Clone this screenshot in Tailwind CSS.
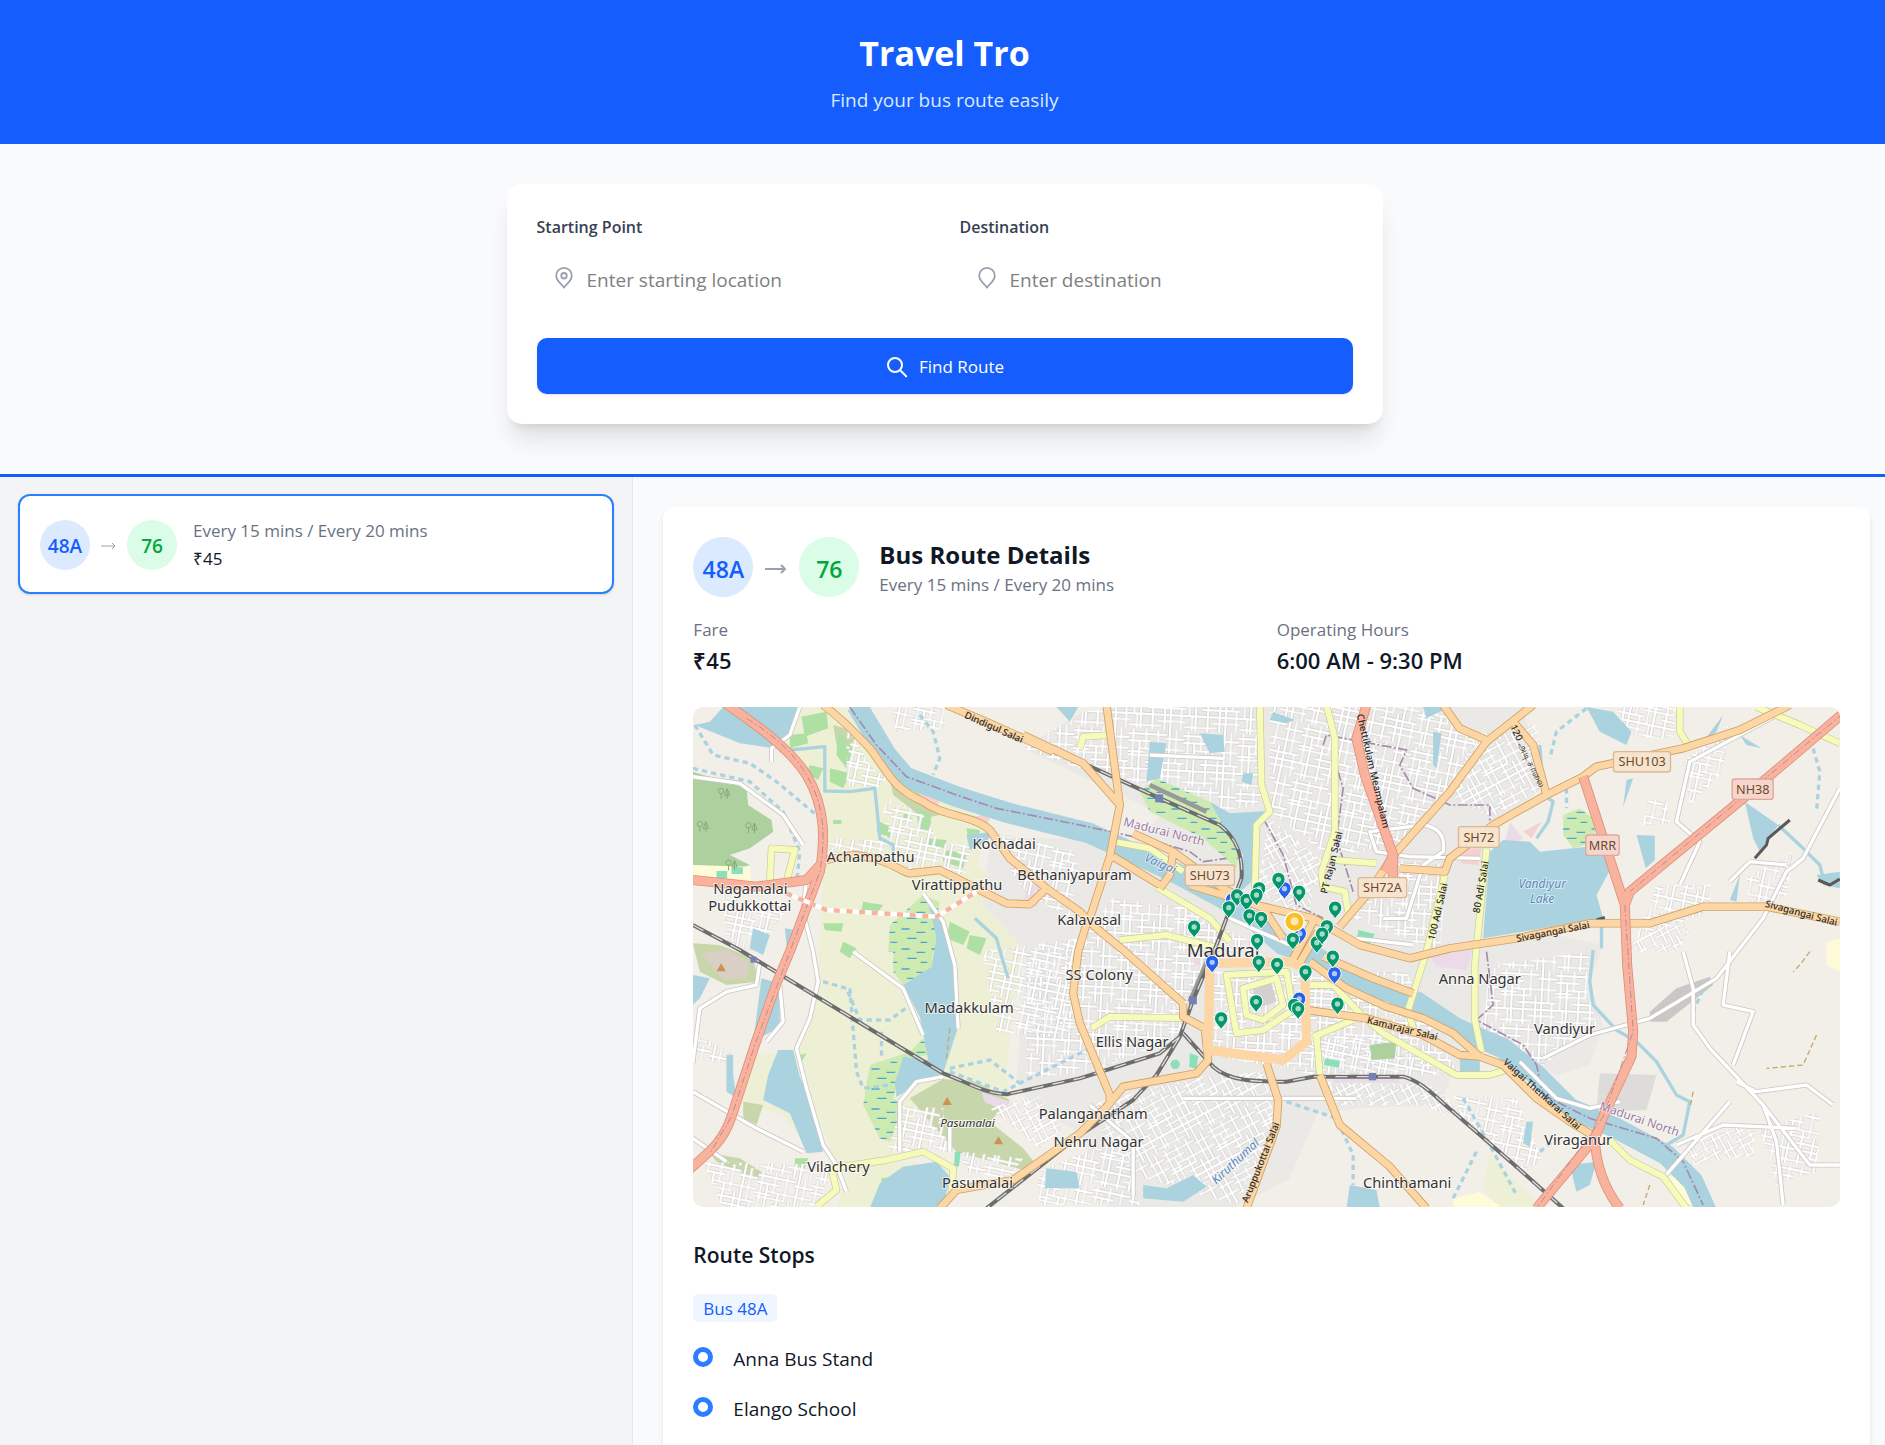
<!DOCTYPE html>
<html lang="en">
<head>
<meta charset="utf-8">
<meta name="viewport" content="width=device-width, initial-scale=1">
<title>Travel Tro</title>
<script src="https://cdn.jsdelivr.net/npm/@tailwindcss/browser@4"></script>
</head>
<body class="flex min-h-screen flex-col bg-gray-50 font-['Segoe_UI','Open_Sans',sans-serif] text-gray-900">

<header class="bg-[#155dfc] py-[30px] pl-1 text-center text-white">
  <h1 class="text-[34px] leading-[46px] font-bold">Travel Tro</h1>
  <p class="mt-2 pt-0.5 text-[19px] leading-7 text-blue-100">Find your bus route easily</p>
</header>

<section class="border-b-[3px] border-[#155dfc] pt-10 pr-5 pb-[50px] pl-6">
  <form class="mx-auto max-w-[876px] rounded-[15px] bg-white p-[30px] shadow-xl">
    <div class="grid grid-cols-2 gap-[30px]">
      <div>
        <label for="from" class="block text-[16px] leading-[26px] font-semibold text-gray-700">Starting Point</label>
        <div class="mt-2 flex h-[60px] items-center gap-3 pl-4">
          <svg class="size-[22px] shrink-0 text-[#99a1af]" viewBox="0 0 24 24" fill="none" stroke="currentColor" stroke-width="2" stroke-linejoin="round"><path d="M12 22.500C9.500 18 3.500 15.500 3.500 9.500a8.500 8.500 0 0 1 17 0C20.500 15.500 14.500 18 12 22.500Z"/><circle cx="12" cy="9.500" r="3"/></svg>
          <input id="from" type="text" placeholder="Enter starting location" class="min-w-0 flex-1 pt-1 text-[19px] leading-[30px] outline-none placeholder:text-[#808080]">
        </div>
      </div>
      <div>
        <label for="to" class="block text-[16px] leading-[26px] font-semibold text-gray-700">Destination</label>
        <div class="mt-2 flex h-[60px] items-center gap-3 pl-4">
          <svg class="size-[22px] shrink-0 text-[#99a1af]" viewBox="0 0 24 24" fill="none" stroke="currentColor" stroke-width="2" stroke-linejoin="round"><path d="M12 22.500C9.500 18 3.500 15.500 3.500 9.500a8.500 8.500 0 0 1 17 0C20.500 15.500 14.500 18 12 22.500Z"/></svg>
          <input id="to" type="text" placeholder="Enter destination" class="min-w-0 flex-1 pt-1 text-[19px] leading-[30px] outline-none placeholder:text-[#808080]">
        </div>
      </div>
    </div>
    <button type="button" class="mt-[30px] flex h-14 w-full items-center justify-center gap-[10px] rounded-[10px] bg-[#155dfc] pt-0.5 text-[17px] text-white shadow-sm">
      <svg class="size-6" viewBox="0 0 24 24" fill="none" stroke="currentColor" stroke-width="2" stroke-linecap="round"><circle cx="10" cy="10" r="7"/><path d="m15.200 15.200 6 6"/></svg>
      Find Route
    </button>
  </form>
</section>

<main class="flex flex-1">
  <aside class="w-[33.6%] shrink-0 border-r border-gray-200 bg-gray-100 px-[18px] pt-[17px]">
    <button type="button" class="flex h-[100px] w-full items-center rounded-[12px] border-2 border-[#2b7fff] bg-white px-5 pt-0.5 text-left shadow-sm">
      <span class="flex size-[50px] items-center justify-center rounded-full bg-blue-100 pt-0.5 text-[19px] font-semibold text-[#155dfc]">48A</span>
      <svg class="mx-[10px] w-[17px] text-[#99a1af]" viewBox="0 0 17 12" fill="none" stroke="currentColor"><path d="M1 7h14M12 4l3 3-3 3"/></svg>
      <span class="flex size-[50px] items-center justify-center rounded-full bg-green-100 pt-0.5 text-[19px] font-semibold text-[#00a63e]">76</span>
      <span class="ml-4 flex flex-col text-[17px] leading-7">
        <span class="text-gray-500">Every 15 mins / Every 20 mins</span>
        <span class="text-gray-900">₹45</span>
      </span>
    </button>
  </aside>

  <section class="min-w-0 flex-1 pt-[30px] pr-[15px] pl-[30px]">
    <article class="rounded-t-[10px] bg-white p-[30px] shadow-md">
      <div class="flex items-center">
        <span class="flex size-[60px] items-center justify-center rounded-full bg-blue-100 pt-1 text-[23px] font-semibold text-[#155dfc]">48A</span>
        <svg class="mx-3 w-[22px] text-[#99a1af]" viewBox="0 0 22 14" fill="none" stroke="currentColor" stroke-width="2"><path d="M0 9h20M16 5l4 4-4 4"/></svg>
        <span class="flex size-[60px] items-center justify-center rounded-full bg-green-100 pt-1 text-[23px] font-semibold text-[#00a63e]">76</span>
        <div class="ml-5 pt-1">
          <h2 class="text-[24px] leading-7 font-bold">Bus Route Details</h2>
          <p class="pt-1 text-[17px] leading-6 text-gray-500">Every 15 mins / Every 20 mins</p>
        </div>
      </div>
      <dl class="mt-5 grid grid-cols-2 gap-5">
        <div><dt class="text-[17px] leading-[26px] text-gray-500">Fare</dt><dd class="text-[22px] leading-[34px] font-semibold">₹45</dd></div>
        <div><dt class="text-[17px] leading-[26px] text-gray-500">Operating Hours</dt><dd class="text-[22px] leading-[34px] font-semibold">6:00 AM - 9:30 PM</dd></div>
      </dl>

      <svg class="mt-[30px] block h-[500px] w-full rounded-[10px] font-['Noto_Sans',sans-serif]" viewBox="9 6 3441 1500" preserveAspectRatio="xMidYMid slice" role="img" aria-label="Map of Madurai with bus stops">
        <defs>
          <path id="blk" d="M0 20H150M0 48H90M40 78H220M0 105H120M70 132H220M0 160H220M110 185H220M0 205H130M150 35H220M0 92H60M18 0V160M44 48V220M70 0V78M92 78V220M118 0V105M140 105V220M164 0V220M190 0V132M206 132V220M30 160V220"/>
          <pattern id="g1" width="220" height="220" patternUnits="userSpaceOnUse" patternTransform="rotate(3) scale(.75)"><use href="#blk" fill="none" stroke="#c6c3c2" stroke-width="13"/><use href="#blk" fill="none" stroke="#fff" stroke-width="9"/></pattern>
          <pattern id="g2" width="220" height="220" patternUnits="userSpaceOnUse" patternTransform="rotate(-28) scale(.7)"><use href="#blk" fill="none" stroke="#c6c3c2" stroke-width="13"/><use href="#blk" fill="none" stroke="#fff" stroke-width="9"/></pattern>
          <pattern id="g3" width="220" height="220" patternUnits="userSpaceOnUse" patternTransform="rotate(12) scale(.75)"><use href="#blk" fill="none" stroke="#c6c3c2" stroke-width="13"/><use href="#blk" fill="none" stroke="#fff" stroke-width="9"/></pattern>
          <pattern id="marsh" width="90" height="60" patternUnits="userSpaceOnUse"><rect width="90" height="60" fill="#cdebb0"/><path d="M5 12h24M50 22h26M22 40h28M62 52h20" stroke="#4ba3d8" stroke-width="4"/></pattern>
          <g id="pin"><path d="M0 31C-6 19-20 12-20-3a20 20 0 0 1 40 0C20 12 6 19 0 31Z" stroke="#fff" stroke-width="3"/><circle cy="-2" r="8" fill="#fff" fill-opacity=".65"/></g>
          <g id="tree" fill="none" stroke="#86ab78" stroke-width="3"><path d="M-8 16V0M10 16V-14L2 6h16L10-14"/><circle cx="-8" cy="-7" r="8"/></g>
          <path id="minor" d="M330 6L300 90L245 130V170M9 215L150 235L280 330L340 420M350 520L340 620L370 740L385 830L360 940L320 1030L350 1150L400 1320L440 1380L470 1460M490 740L640 850L700 990M700 565L760 650L795 780L805 970M630 1340V1190L680 1130L760 1115M9 1075L30 910L110 860L200 840L210 770M110 1370L9 1300M270 840L280 950L230 1010M3450 250L3340 460L3290 500L3220 640L3080 820L2880 940L2700 990L2560 1060M3280 20L3000 170L2960 350L3030 410L2970 540M2980 740L3010 850L3010 960L3060 1030L3220 1200L3360 1380H3450M3220 1200L3260 1310L3280 1500M3140 1130L3200 1160L3350 1140L3430 1200M3120 740L3100 900L3190 920L3130 1080M2920 1420L3120 1190M2490 1070L2600 1180L2700 1210L2790 1190M1380 150L1600 160M2370 460L2160 455L2060 440L2040 380L2200 360Q2270 370 2260 440L2200 480L2150 640L2080 640M1480 1180H2000M2000 700L2170 720M9 1160L200 1270L340 1340M1200 1200L1330 1310V1470M1600 560L1720 620M1620 640L1800 720M3320 1270L3100 1260L2960 1320M780 1340V1250M3180 470L3290 480M3120 530L3180 470"/>
          <path id="secondary" d="M1710 0L1715 240L1740 320L1700 360L1695 560M1910 0L1935 100V380L1895 500L1900 545L1965 560L1975 620M1930 465L2060 475M1170 130L1180 95L1260 90M2390 430L2355 780V945L2375 1040M2265 510L2210 740L2155 915L2170 970M1205 970L1260 935L1490 940M1610 810L1640 985L1720 975L1810 915L1790 800ZM1660 850L1760 820L1780 900L1720 945L1670 930ZM1860 840H1930L2010 925L2080 985L2160 1030L2300 1110H2400L2450 1095M1870 995L1990 945M1880 990L1890 1110M1270 410L1380 430L1480 500M1290 705L1430 690L1590 730M1400 545L1560 640L1620 710M380 1505L440 1455L425 1390L590 1365L700 1340L790 1390L785 1470M2970 0V80L2995 120M3200 6L3330 60L3450 115M2760 1305L2820 1365L2920 1415L2990 1510M240 530L245 430L315 435L290 530"/>
          <path id="rail" d="M1000 90L1170 170L1410 280L1590 360C1640 400 1660 450 1655 520L1580 720L1510 885L1470 995L1400 1110L1330 1185L1170 1290L890 1510M9 660L150 735L480 935L760 1105C830 1130 880 1165 950 1168L1170 1120L1410 1045L1470 995M1480 985L1570 1085C1620 1130 1700 1130 1790 1130L1870 1115H2140C2200 1130 2240 1180 2290 1220L2480 1385L2620 1510"/>
          <path id="primary" d="M400 0C480 60 500 90 540 130C600 210 610 250 700 290C760 335 850 330 900 375L960 460L1070 550L1170 620L1220 670L1300 735L1480 895M410 465L490 450C600 460 630 500 660 505L750 495L850 545L950 595L1020 598L1070 550M1195 640L1165 740L1150 865L1170 955L1260 1170V1200M750 1510L800 1455L970 1425L1170 1285L1260 1195L1300 1145L1520 1105L1555 1065L1545 970L1480 935V895M2530 0L2390 110L2280 260L2120 440L2030 570L1950 665M2260 0L2310 70L2390 105M3300 0L3150 75L2980 130L2720 185L2680 215L2570 270L2410 360L2280 460L2265 500L2130 490M1500 540L1700 600L1870 640L2010 720L2160 760L2280 730L2480 700L2700 655H2880L3040 605H3230L3450 650M1270 455L1410 540M1450 440L1440 510L1410 550M1330 385L1450 440L1600 550L1720 610L1780 700M770 0L900 55L1090 140M1000 90L1180 175L1290 300M1250 0L1290 300L1260 455L1200 640M1860 770L1970 850L2090 905L2200 940L2290 985L2370 1055L2440 1080L2540 1180L2640 1250L2715 1295M1850 915L2030 940L2200 990L2310 1050L2380 1055M1900 755L2050 820L2170 865M1870 650L1800 780M1885 680L1820 790M1730 1075L1765 1185L1760 1265L1670 1510M1890 1110L1950 1260L2100 1385L2210 1510M2470 50L2530 120L2570 270"/>
          <path id="trunk" d="M100 -10C200 60 300 130 350 210C410 310 405 410 390 500L300 740L262 830L195 1020L125 1235C100 1310 60 1340 0 1392M9 525L200 545L350 525L400 470M2030 0L2000 100L2025 210L2110 450L2085 500M2110 450L2110 515M2680 215L2805 600L2812 780L2830 980L2825 1055L2740 1235L2715 1300L2540 1510M2715 1300Q2720 1420 2790 1510M3460 25L3160 280L2820 560L2805 600"/>
        </defs>
        <rect x="0" y="0" width="3460" height="1520" fill="#f2efe9"/>

        <!-- farmland, woods and scrub -->
        <g fill="#eef0d5">
          <path d="M330 6H480L620 210L900 350L860 480L1000 560L990 740L950 1100L960 1180L700 1190L600 1370L440 1380L340 1120L320 1000L380 900L400 480L410 300L270 130Z"/>
          <path d="M200 1050L320 1040L390 1260L360 1340L280 1230L150 1190ZM480 1390L600 1370L780 1380L700 1510H440ZM2400 1350L2560 1510H2430L2380 1450Z"/>
        </g>
        <path d="M9 200L170 250L175 300L245 345L250 380L180 430L120 450L180 480L150 490L9 480Z" fill="#add19e"/>
        <g fill="#c8d7ab">
          <path d="M660 1180L760 1122L860 1130L960 1185L900 1250L1000 1330L1040 1380L1020 1400L800 1340L720 1250ZM60 1345L150 1360L215 1400L205 1425L80 1370ZM160 1190L220 1200L200 1260L160 1240ZM9 715L90 720L190 760L205 830L110 840L30 800Z"/>
          <path d="M430 60L500 80L480 140L440 120ZM600 220L700 270L750 330L700 340L610 270Z"/>
        </g>
        <path d="M35 745L110 735L180 770L170 820L100 825Z" fill="#d9cfc4"/>
        <path d="M335 35l75-15 5 50-70 25zM300 90l50-5 5 30-55 15zM445 80l45 50-20 60-30-40zM360 180l40 10-15 35-35-20zM420 190l60 15-20 45-40-20zM680 310l45 20-5 50-35-10zM710 400l60 5-5 25-55-10zM760 435l70 10-10 45-60-20zM830 370l40 5-5 40-30-10zM900 470l50 5-10 60-40-20zM570 350l40 20-10 30-40-20zM780 650l60 30-20 40-50-20zM840 690l50 10-20 50-40-20zM400 655l60 0-5 25-50-5zM460 710l40 20-20 30-30-20zM520 590l60 10-15 20-50-5zM640 330l20-10 5 25-20 5zM430 345l25 0 0 12-25 0zM315 1360l40 0-10 30-30-10zM575 1420l50-7-10 18-40 5zM330 1050l20-5-15 25z" fill="#aedfa3"/>
        <path d="M9 480L180 485L185 535L9 530ZM1420 1120L1475 1000L1550 1075L1520 1100ZM2000 640L2200 670L2210 740L2130 745L1970 690ZM1430 1130L1510 1120L1510 1150L1425 1150ZM2930 1410L3000 1430L3010 1500L2970 1490ZM2290 1480L2370 1460L2440 1510H2290ZM3410 710L3450 700V800L3410 780Z" fill="#fdfbd8"/>

        <!-- built-up districts -->
        <path d="M1000 130L1180 20L1300 6H2500L2560 240L2400 400L2390 700L2600 690L2740 720L2700 830L2740 960L2700 1080L2600 1110L2380 1000L2290 1100L2250 1200L2000 1210L1880 1230L1800 1420L1640 1506H1250L1180 1290L1020 1200L980 1120L1010 740L880 600L900 400L1150 400L1300 430L1420 330Z" fill="#ebe9e6"/>
        <path d="M2730 1105L2900 1110L2870 1215L2720 1220Z" fill="#dedcda"/>
        <path d="M2880 920L2960 850L3060 815L3070 840L2930 950L2880 950Z" fill="#c9c8c6"/>
        <path d="M1010 560l40-35 20 20-30 60-40-15zM875 1162l90 30-30 20-50-20zM1930 1118h200v15h-200zM2210 740l140-5-20 60-90-10zM2460 350l40 50-30 20-25-10zM1500 730l60 10-5 40-40 0z" fill="#ebdbe8"/>
        <path d="M840 340l70-20-20 40zM2310 430l65 0-10 50-50-5zM2500 380l55-30-30 50zM690 260l60 20-10 30-50-20z" fill="#f6cfd0"/>
        <path d="M1000 130L1180 20L1300 6H1700L1720 300L1560 320L1400 250L1170 190ZM1270 580L1500 610L1700 720L1560 760L1500 900L1470 1000L1200 1100L1010 1120L1010 740L1180 700ZM1560 800H2150L2300 1100L1880 1110L1560 1050ZM2100 460L2270 480L2250 740L1990 640ZM2400 780L2700 740L2690 850L2720 960L2560 1080L2380 980Z" fill="url(#g1)"/>
        <path d="M1740 340L1900 470L1850 640L1700 560ZM1200 1200L1500 1120L1720 1100L1760 1260L1640 1500L1300 1400ZM1880 1130L2220 1140L2400 1280L2200 1200L1940 1200ZM900 1210L1040 1170L1120 1270L1050 1330ZM2800 740L2960 620L3000 680L2960 740ZM2990 1310L3200 1250L3190 1350L3000 1380ZM2340 90L2540 60L2560 250L2400 340L2290 280Z" fill="url(#g2)"/>
        <path d="M1740 6H2240L2390 120L2280 240L2120 440L1900 440L1740 320ZM880 740L1170 700L1140 1000L920 980ZM900 380L1170 440L1140 640L1000 560ZM470 60L540 180L590 220L560 250L470 240ZM600 6L760 6L770 70L620 80ZM580 270L700 330L800 500L590 480ZM410 400L850 420L820 520L420 450ZM100 570L300 600L200 740L110 720ZM9 985L130 1040L110 1080L9 1060ZM40 1370L440 1380L380 1500L100 1510ZM600 1200L760 1210L770 1340L600 1340ZM2980 170L3120 60L3100 200L3000 300ZM2870 290L2930 280L2940 360L2860 360ZM3210 1270L3390 1220L3380 1400L3260 1440ZM2900 540L3060 540L3060 620L2840 700ZM2780 6H2960L2950 100L2820 100ZM3170 520L3310 440L3290 570L3180 600ZM820 1340L1000 1360L960 1420L820 1400ZM1040 1400L1300 1300L1350 1500H1050ZM2290 1170L2480 1180L2560 1370L2480 1400L2320 1230ZM1850 1000L2080 1000L2250 1110H1900Z" fill="url(#g3)"/>
        <path d="M2040 1020l80-10-5 50-70 5z" fill="#add19e"/>
        <g fill="#8be0b8"><path d="M80 498h32v22h-32zM125 487h34v20h-34zM2005 675l50 12-15 30-38-10zM1905 1060l45 8-3 20-45-8zM795 1340l18 0-6 45-14-2zM1500 1045l25 8-5 40-22-8z"/><circle cx="1456" cy="1078" r="14"/></g>
        <path d="M1690 850l55-15 15 55-60 20z" fill="#d2d0d0"/>

        <!-- wetland -->
        <path d="M600 660L700 570L750 590L740 640L770 720L730 740L725 785L640 840L610 800L610 740L595 740ZM540 1080L660 1040L700 1000L720 1050L640 1060L610 1180L640 1200L600 1310L570 1300L520 1200ZM1350 260L1400 220L1560 290L1600 350L1650 430L1640 490L1540 400L1380 320ZM2620 330L2670 310L2710 340L2720 410L2650 430L2620 390Z" fill="url(#marsh)"/>

        <!-- water -->
        <g fill="#aad3df">
          <path d="M60 50L100 6H325L300 80L240 128L150 115L15 60Z"/>
          <path d="M2400 440L2440 405L2520 410L2550 440L2740 420L2758 500L2720 570L2740 640L2380 700Z"/>
          <path d="M710 570L760 650L795 780L802 975L760 1105L690 1135L620 1175L615 1135L640 1055L715 1065L690 935L640 840L725 785L740 700Z"/>
          <path d="M265 1035L310 1035L330 1115L375 1215L400 1340L350 1345L300 1225L220 1185L235 1110Z"/>
          <path d="M540 1510L570 1435L640 1385L740 1370L780 1415L760 1510Z"/>
          <path d="M1360 1440L1430 1450L1510 1410L1550 1445L1480 1490L1360 1480ZM1980 1440L2060 1455L2070 1510H1970Z"/>
          <path d="M1560 290L1620 325L1730 318L1700 360L1685 530L1650 560L1660 450L1600 360Z"/>
          <path d="M2690 6L2770 20L2825 80L2810 120L2730 80ZM3165 290L3265 360L3210 440L3190 400ZM2840 390L2895 392L2895 465L2868 490ZM1380 110L1430 115L1410 220L1370 230ZM1530 85L1600 90L1605 140L1560 145ZM1750 20L1815 45L1790 55L1740 45ZM1660 205L1690 205L1685 240L1655 230ZM2230 80L2255 85L2240 190L2230 180ZM3100 30L3080 80L3040 110ZM2810 225L2830 220L2800 305ZM3150 510L3140 590L3120 585ZM9 810L60 820L30 880L9 900ZM215 820L268 835L270 965L190 1010ZM110 1050h20v60l10 70-30-20zM190 670l50 20-20 60-40-20zM285 670l30 5-20 90zM830 390l80-10-20 30-50 25zM1070 1390L1160 1400L1170 1450L1065 1450ZM2310 1050h60v60h-60zM2510 1250h20l-10 75-20-10zM2640 1380L2720 1370L2700 1440L2660 1460ZM3380 510L3450 500V550L3400 540ZM3150 90L3215 130L3170 120ZM2200 6H2280L2210 40ZM1100 6H1165L1140 50Z"/>
        </g>
        <g fill="none" stroke="#aad3df" stroke-linejoin="round">
          <path d="M500 0L590 150L645 215L800 275L960 325L1200 385L1300 430L1450 500L1600 580L1700 650L1780 720L1860 745L1960 805L2070 850L2180 890L2300 970L2440 1030L2540 1110L2640 1210L2780 1270L2930 1350L3010 1430L3050 1520" stroke-width="62"/>
          <path d="M270 138L405 125V258L480 260L555 250L570 400L610 420V480M855 640L920 700L940 770L955 820M2710 735L2700 830L2710 900L2780 975L2840 1010L2900 1070L2960 1170L3000 1190L2980 1290L2930 1320M3265 360L3340 430L3390 480L3400 520M2550 120L2560 270L2590 290L2575 350L2540 400M2735 640V730" stroke-width="10"/>
          <path d="M15 60L70 150L180 175L260 230L380 330M9 190L180 230L280 320L330 440L320 540M690 30L730 80L750 160L730 210M2690 10L2600 80L2580 160M2630 250V310M3370 130L3390 200L3380 320M400 830L470 850L510 945L600 945L660 900M480 850L500 1100L520 1150L600 1140M575 980V1060M780 1090L900 1065L990 1135M780 1100L940 1160L1200 1030M1790 1190L1940 1240L1990 1350V1440M2320 1180L2400 1320L2480 1470M2290 1480L2360 1340M2550 1340L2600 1300M3050 830L3010 920" stroke-width="10" stroke-dasharray="16 12"/>
        </g>

        <!-- administrative boundary -->
        <path d="M480 6L560 120L650 215L800 270L920 310L1170 360L1400 410L1500 440L1540 470L1610 460M1720 340L1780 450L1820 600L1900 640M1900 120L1910 90L2150 135L2130 180L2170 250L2280 300L2400 300V400M1930 150L1960 250L1940 400L1990 560M2390 740L2410 900L2360 945L2500 1020L2540 1080L2560 1170L2700 1240L2900 1300L2980 1370L3040 1500" fill="none" stroke="#a58aac" stroke-width="5" stroke-dasharray="30 7 6 7"/>

        <!-- roads and railways, each drawn as a casing with a fill on top -->
        <g fill="none" stroke-linejoin="round">
          <use href="#minor" stroke="#cbc8c4" stroke-width="15"/>
          <use href="#minor" stroke="#fff" stroke-width="10"/>
          <path d="M3360 740L3330 780L3310 800M3380 990L3340 1080L3230 1090M3010 1160L3000 1210M780 970L770 1060M2880 1440L2860 1500" stroke="#c9a66b" stroke-width="4" stroke-dasharray="16 9"/>
          <use href="#secondary" stroke="#c9cd98" stroke-width="22"/>
          <use href="#secondary" stroke="#f6fabb" stroke-width="18"/>
          <path d="M1380 240L1550 320M1560 750L1500 890" stroke="#999" stroke-width="14"/>
          <use href="#rail" stroke="#6d6d6d" stroke-width="12"/>
          <use href="#rail" stroke="#ddd" stroke-width="4" stroke-dasharray="36 28"/>
          <path d="M3195 460L3230 420L3235 400L3300 345M3385 525L3420 540L3450 522M2720 645L2745 637" stroke="#595959" stroke-width="9"/>
          <use href="#primary" stroke="#d1a062" stroke-width="25"/>
          <use href="#primary" stroke="#fcd6a4" stroke-width="20"/>
          <path d="M1560 785L1555 1035L1780 1065L1850 1010L1845 790L1800 770L1580 775" stroke="#fcd6a4" stroke-width="28"/>
          <use href="#trunk" stroke="#de8f7d" stroke-width="30"/>
          <use href="#trunk" stroke="#f9b29c" stroke-width="25"/>
          <path d="M170 40C250 90 310 140 350 210C410 310 405 410 390 500L300 740L195 1020L125 1235L60 1345M2805 600L2830 980L2740 1235L2540 1510M3460 25L2820 560" stroke="#b98a9d" stroke-width="3" stroke-dasharray="22 8 5 8"/>
          <path d="M290 565L410 615L740 635L860 560" stroke="#fff" stroke-width="13"/>
          <path d="M290 565L410 615L740 635L860 560" stroke="#f9b29c" stroke-width="13" stroke-dasharray="18 20"/>
        </g>

        <use href="#tree" x="102" y="265"/><use href="#tree" x="38" y="364"/><use href="#tree" x="184" y="368"/><use href="#tree" x="124" y="480"/>
        <path d="M94 775l14 24H80ZM772 1176l14 24h-28ZM926 1294l14 24h-28Z" fill="#d08f55"/>
        <g fill="#7381b3"><rect x="182" y="755" width="18" height="18"/><rect x="1396" y="268" width="24" height="24"/><rect x="1497" y="874" width="24" height="24"/><rect x="2037" y="1104" width="22" height="22"/></g>

        <!-- place names -->
        <g fill="#333" stroke="#fff" stroke-opacity=".7" stroke-width="6" paint-order="stroke" font-size="44" text-anchor="middle">
          <text x="943" y="431">Kochadai</text><text x="542" y="472">Achampathu</text><text x="802" y="555">Virattippathu</text><text x="1154" y="525">Bethaniyapuram</text>
          <text x="182" y="567">Nagamalai</text><text x="180" y="619">Pudukkottai</text><text x="1198" y="661">Kalavasal</text>
          <text x="1228" y="825">SS Colony</text><text x="838" y="925">Madakkulam</text><text x="1327" y="1027">Ellis Nagar</text>
          <text x="1210" y="1243">Palanganatham</text><text x="1226" y="1327">Nehru Nagar</text><text x="446" y="1402">Vilachery</text><text x="863" y="1448">Pasumalai</text>
          <text x="2370" y="837">Anna Nagar</text><text x="2624" y="988">Vandiyur</text><text x="2665" y="1320">Viraganur</text><text x="2152" y="1448">Chinthamani</text>
          <text x="1600" y="755" font-size="56">Madurai</text>
          <text x="833" y="1265" font-size="35" font-style="italic">Pasumalai</text>
        </g>
        <g stroke="#fff" stroke-opacity=".6" stroke-width="5" paint-order="stroke" font-size="36" font-style="italic" text-anchor="middle">
          <text x="2557" y="549" fill="#5b86bd">Vandiyur</text><text x="2557" y="593" fill="#5b86bd">Lake</text>
          <text transform="translate(1407 487) rotate(24)" fill="#5b86bd">Vaigai</text>
          <text transform="translate(1645 1378) rotate(-43)" fill="#5b86bd">Kiruthumal</text>
          <text transform="translate(1420 392) rotate(14)" fill="#9c7ba5" font-style="normal">Madurai North</text>
          <text transform="translate(2845 1254) rotate(19)" fill="#9c7ba5" font-style="normal">Madurai North</text>
        </g>
        <g fill="#2b2b2b" font-size="29" font-weight="500" text-anchor="middle">
          <text transform="translate(908 76) rotate(24)">Dindigul Salai</text>
          <text transform="translate(2040 200) rotate(77)">Chettikulam Meampalam</text>
          <text transform="translate(1935 475) rotate(-76)">PT Rajan Salai</text>
          <text transform="translate(2254 622) rotate(-77)">100 Adi Salai</text>
          <text transform="translate(2383 548) rotate(-80)">80 Adi Salai</text>
          <text transform="translate(2504 158) rotate(65)">120 அடி சாலை</text>
          <text transform="translate(2591 690) rotate(-11)">Sivagangai Salai</text>
          <text transform="translate(3332 634) rotate(15)">Sivagangai Salai</text>
          <text transform="translate(2135 980) rotate(14)">Kamarajar Salai</text>
          <text transform="translate(2550 1175) rotate(42)">Vaigai Thenkarai Salai</text>
          <text transform="translate(1722 1376) rotate(-68)">Aruppukottai Salai</text>
        </g>

        <!-- route shields -->
        <g font-size="38" text-anchor="middle" fill="#6d4a2c">
          <g fill="#f7e4cf" stroke="#d9b896" stroke-width="4"><rect x="1486" y="480" width="148" height="62" rx="8"/><rect x="2005" y="518" width="146" height="60" rx="8"/><rect x="2306" y="365" width="122" height="62" rx="8"/><rect x="2771" y="140" width="171" height="61" rx="8"/></g>
          <g fill="#f6d5cd" stroke="#dfa69b" stroke-width="4"><rect x="3127" y="222" width="123" height="61" rx="8"/><rect x="2688" y="390" width="100" height="61" rx="8"/></g>
          <text x="1560" y="525">SHU73</text><text x="2078" y="562">SH72A</text><text x="2367" y="410">SH72</text><text x="2857" y="184">SHU103</text><text x="3189" y="267">NH38</text><text x="2738" y="434">MRR</text>
        </g>

        <!-- bus stops -->
        <g fill="#2563eb"><use href="#pin" x="1784" y="553"/><use href="#pin" x="1627" y="587"/><use href="#pin" x="1830" y="688"/><use href="#pin" x="1567" y="774"/><use href="#pin" x="1934" y="808"/><use href="#pin" x="1828" y="884"/></g>
        <g fill="#059669">
          <use href="#pin" x="1766" y="525"/><use href="#pin" x="1708" y="553"/><use href="#pin" x="1828" y="563"/><use href="#pin" x="1642" y="574"/><use href="#pin" x="1670" y="588"/><use href="#pin" x="1700" y="572"/><use href="#pin" x="1617" y="610"/><use href="#pin" x="1936" y="611"/>
          <use href="#pin" x="1679" y="634"/><use href="#pin" x="1714" y="642"/><use href="#pin" x="1513" y="668"/><use href="#pin" x="1911" y="667"/><use href="#pin" x="1881" y="715"/><use href="#pin" x="1897" y="689"/><use href="#pin" x="1809" y="705"/><use href="#pin" x="1702" y="708"/>
          <use href="#pin" x="1929" y="758"/><use href="#pin" x="1707" y="773"/><use href="#pin" x="1762" y="780"/><use href="#pin" x="1847" y="802"/><use href="#pin" x="1699" y="892"/><use href="#pin" x="1943" y="899"/><use href="#pin" x="1813" y="903"/><use href="#pin" x="1825" y="913"/><use href="#pin" x="1594" y="943"/>
        </g>
        <circle cx="1814" cy="650" r="29" fill="#fbbf24" stroke="#fff" stroke-width="4"/><circle cx="1814" cy="649" r="12" fill="#fde9b4"/>
      </svg>

      <h3 class="mt-[30px] text-[21px] leading-9 font-semibold">Route Stops</h3>
      <p class="mt-[21px] w-fit rounded-[5px] bg-blue-50 px-[10px] pt-0.5 text-[17px] leading-[26px] text-[#155dfc]">Bus 48A</p>
      <ul class="mt-5 flex flex-col gap-[18px] text-[19px] leading-[30px]">
        <li class="flex items-start gap-5"><span class="mt-[5px] size-5 rounded-full border-[5px] border-[#2b7fff] bg-white"></span><span class="pt-0.5">Anna Bus Stand</span></li>
        <li class="flex items-start gap-5"><span class="mt-[5px] size-5 rounded-full border-[5px] border-[#2b7fff] bg-white"></span><span class="pt-0.5">Elango School</span></li>
      </ul>
    </article>
  </section>
</main>
</body>
</html>
